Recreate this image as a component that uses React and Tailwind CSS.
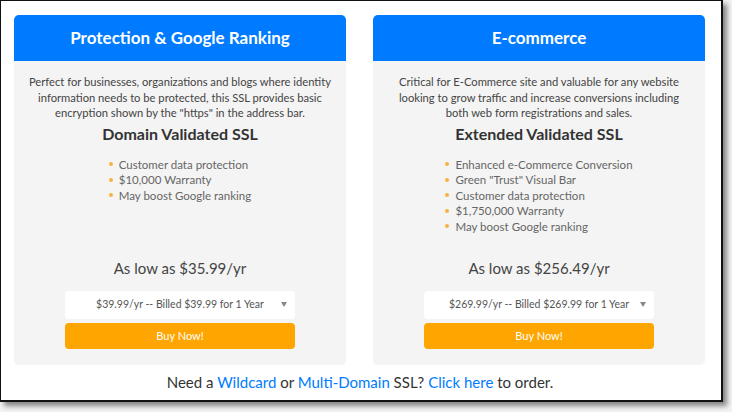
const plans = [
  {
    header: 'Protection & Google Ranking',
    desc: 'Perfect for businesses, organizations and blogs where identity information needs to be protected, this SSL provides basic encryption shown by the "https" in the address bar.',
    descW: 'w-[306px]',
    title: 'Domain Validated SSL',
    features: ['Customer data protection', '$10,000 Warranty', 'May boost Google ranking'],
    price: 'As low as $35.99/yr',
    option: '$39.99/yr -- Billed $39.99 for 1 Year',
  },
  {
    header: 'E-commerce',
    desc: 'Critical for E-Commerce site and valuable for any website looking to grow traffic and increase conversions including both web form registrations and sales.',
    descW: 'w-[292px]',
    title: 'Extended Validated SSL',
    features: ['Enhanced e-Commerce Conversion', 'Green "Trust" Visual Bar', 'Customer data protection', '$1,750,000 Warranty', 'May boost Google ranking'],
    price: 'As low as $256.49/yr',
    option: '$269.99/yr -- Billed $269.99 for 1 Year',
  },
]

export default function App() {
  return (
    <div className="w-[732px] h-[412px] bg-[#f2f2f2] overflow-hidden" style={{ fontFamily: 'Lato, "Noto Sans", sans-serif' }}>
      {/* framed screenshot with drop shadow */}
      <div className="w-[723px] h-[402px] bg-white border-l border-t border-r-2 border-b-2 border-[#111] shadow-[4px_4px_5px_rgba(0,0,0,0.45)] pt-[14px] pl-[13px]">
        <div className="flex gap-[27px]">
          {plans.map(p => <PlanCard key={p.title} plan={p} />)}
        </div>
        <p className="w-[692px] text-center text-[15px] text-[#333] mt-[7px] leading-5">
          Need a <span className="text-[#007bff]">Wildcard</span> or <span className="text-[#007bff]">Multi-Domain</span> SSL? <span className="text-[#007bff]">Click here</span> to order.
        </p>
      </div>
    </div>
  )
}

function PlanCard({ plan }) {
  return (
    <div className="w-[332px] h-[350px] bg-[#f4f4f4] rounded-[5px] overflow-hidden flex flex-col">
      <div className="h-[46px] bg-[#007bff] text-white text-[17px] font-bold flex items-center justify-center">
        {plan.header}
      </div>
      <div className="flex-1 flex flex-col items-center pt-[13px] pb-[16px]">
        <p className={`${plan.descW} text-[11.2px] leading-[15.5px] text-[#444] text-center`}>{plan.desc}</p>
        <h2 className="text-[16px] font-bold text-[#333] leading-5 mt-[3px]">{plan.title}</h2>
        <ul className="mt-[13px] text-[11.5px] leading-[15.5px] text-[#666]">
          {plan.features.map(f => (
            <li key={f} className="flex items-center gap-[6px]">
              <span className="w-[4px] h-[4px] rounded-full bg-[#f5b342]" />
              {f}
            </li>
          ))}
        </ul>
        <div className="mt-auto w-[230px] flex flex-col items-center">
          <p className="text-[15px] leading-5 text-[#444]">{plan.price}</p>
          <div className="mt-[13px] w-full h-[28px] bg-white rounded-[4px] flex items-center justify-center relative text-[10.5px] text-[#555]">
            {plan.option}
            <span className="absolute right-[8px] top-[11px] w-0 h-0 border-l-[3px] border-r-[3px] border-t-[5px] border-l-transparent border-r-transparent border-t-[#888]" />
          </div>
          <button className="mt-[4px] w-full h-[26px] bg-[#ffa500] rounded-[4px] text-white text-[11px]">Buy Now!</button>
        </div>
      </div>
    </div>
  )
}
